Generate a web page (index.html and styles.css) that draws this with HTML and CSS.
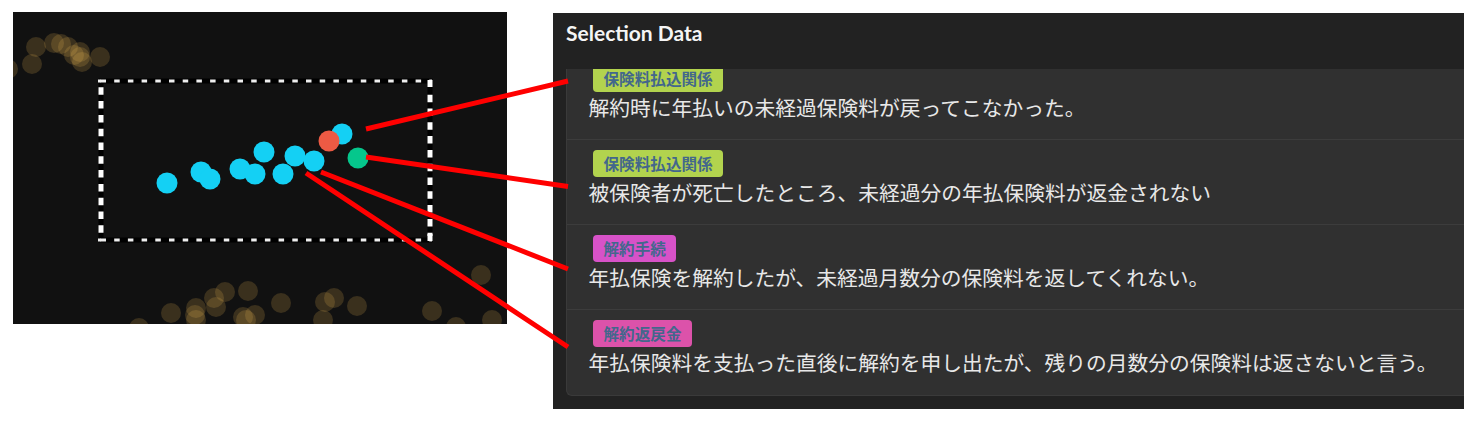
FILE: index.html
```html
<!DOCTYPE html>
<html lang="ja">
<head>
<meta charset="utf-8">
<title>Selection Data</title>
<link rel="stylesheet" href="styles.css">
</head>
<body>
<main class="page">
  <svg class="scatter" width="494" height="312" viewBox="13 12 494 312" aria-hidden="true">
    <rect class="plot-bg" x="13" y="12" width="494" height="312"/>
    <g class="dots">
      <g class="gold">
        <circle cx="36" cy="47" r="10"/><circle cx="54" cy="43" r="10"/><circle cx="61" cy="44" r="10"/><circle cx="68" cy="47" r="10"/>
        <circle cx="80" cy="52" r="10"/><circle cx="80" cy="57" r="10"/><circle cx="82" cy="62" r="10"/><circle cx="74" cy="55" r="10"/>
        <circle cx="100" cy="57" r="10"/><circle cx="32" cy="64" r="10"/><circle cx="8" cy="69" r="10"/>
        <circle cx="481" cy="275" r="10"/><circle cx="225" cy="292" r="10"/><circle cx="248" cy="291" r="10"/><circle cx="214" cy="298" r="10"/>
        <circle cx="216" cy="307" r="10"/><circle cx="196" cy="308" r="10"/><circle cx="171" cy="313" r="10"/><circle cx="195" cy="315" r="10"/>
        <circle cx="196" cy="320" r="10"/><circle cx="139" cy="328" r="10"/><circle cx="255" cy="315" r="10"/><circle cx="243" cy="317" r="10"/>
        <circle cx="246" cy="320" r="10"/><circle cx="281" cy="303" r="10"/><circle cx="334" cy="298" r="10"/><circle cx="325" cy="302" r="10"/>
        <circle cx="357" cy="306" r="10"/><circle cx="323" cy="320" r="10"/><circle cx="432" cy="311" r="10"/><circle cx="456" cy="327" r="10"/>
        <circle cx="492" cy="320" r="10"/>
      </g>
      <g class="blue">
        <circle cx="167" cy="183" r="10.5"/><circle cx="201" cy="172" r="10.5"/><circle cx="210" cy="179" r="10.5"/><circle cx="240" cy="169" r="10.5"/>
        <circle cx="255" cy="174" r="10.5"/><circle cx="264" cy="152" r="10.5"/><circle cx="283" cy="174" r="10.5"/><circle cx="295" cy="156" r="10.5"/>
        <circle cx="314" cy="161" r="10.5"/><circle cx="342" cy="134" r="10.5"/>
      </g>
      <circle class="red" cx="329" cy="141" r="10.5"/>
      <circle class="green" cx="358" cy="158" r="10.5"/>
    </g>
    <g class="selection">
      <path class="sel-back" d="M101 81H430V240H101Z"/>
      <path class="sel-h" d="M100.500 81H432M100.500 240H432"/>
      <path class="sel-corner" d="M98 81H101M98 240H101"/>
      <path class="sel-v" d="M101 87.300V236M430 94.700V236"/>
      <path class="sel-corner-v" d="M430 80V87M430 234V241"/>
    </g>
  </svg>

  <section class="panel">
    <h2 class="panel-title">Selection Data</h2>
    <div class="list-clip">
      <ul class="list">
        <li class="row"><span class="tag tag-green">保険料払込関係</span><p class="row-text">解約時に年払いの未経過保険料が戻ってこなかった。</p></li>
        <li class="row"><span class="tag tag-green">保険料払込関係</span><p class="row-text">被保険者が死亡したところ、未経過分の年払保険料が返金されない</p></li>
        <li class="row"><span class="tag tag-purple">解約手続</span><p class="row-text">年払保険を解約したが、未経過月数分の保険料を返してくれない。</p></li>
        <li class="row"><span class="tag tag-pink">解約返戻金</span><p class="row-text">年払保険料を支払った直後に解約を申し出たが、残りの月数分の保険料は返さないと言う。</p></li>
      </ul>
    </div>
  </section>

  <svg class="connectors" width="1477" height="427" viewBox="0 0 1477 427" aria-hidden="true">
    <path d="M366 129L568 81M366 157L568 186.500M321 172L568 269M306 173L568 347"/>
  </svg>
</main>
</body>
</html>
```
FILE: styles.css
```css
html, body {
  margin: 0;
  padding: 0;
  background: #fff;
}

.page {
  position: relative;
  display: flex;
  align-items: flex-start;
  gap: 46px;
  width: 1477px;
  height: 427px;
  padding: 12px 0 0 13px;
  box-sizing: border-box;
  overflow: hidden;
}

.scatter {
  display: block;
  flex: none;
}

.plot-bg { fill: #111; }
.dots { filter: blur(0.7px); }
.gold circle { fill: #e0b050; fill-opacity: 0.2; }
.blue circle { fill: #14d0f4; }
.red { fill: #ec5a44; }
.green { fill: #05c78c; }

.selection { filter: blur(0.4px); }
.sel-back { fill: none; stroke: #000; stroke-width: 5; }
.sel-h { fill: none; stroke: #eee; stroke-width: 3; stroke-dasharray: 5.500 8.200; }
.sel-corner { fill: none; stroke: #eee; stroke-width: 3; }
.sel-v { fill: none; stroke: #fff; stroke-width: 5; stroke-dasharray: 7.500 6.300; }
.sel-corner-v { fill: none; stroke: #fff; stroke-width: 5; }

.panel {
  flex: none;
  width: 911px;
  height: 396px;
  margin-top: 1px;
  background: #222;
  display: flex;
  flex-direction: column;
  padding-left: 13px;
  box-sizing: border-box;
  overflow: hidden;
}

.panel-title {
  flex: none;
  height: 56px;
  margin: 0;
  font: 700 21px/40px Lato, "Liberation Sans", sans-serif;
  color: #f5f5f5;
}

.list-clip {
  flex: none;
  height: 327px;
  overflow: hidden;
}

.list {
  list-style: none;
  margin: -15px 0 0;
  padding: 0;
  height: 342px;
  box-sizing: border-box;
  background: #303030;
  border: 1px solid #3a3a3a;
  border-right: 0;
  border-radius: 0 0 0 6px;
}

.row {
  height: 85px;
  box-sizing: border-box;
  padding-top: 10px;
  border-bottom: 1px solid #3c3c3c;
}

.row:last-child { border-bottom: 0; }

.tag {
  display: block;
  width: max-content;
  height: 27px;
  margin-left: 26px;
  padding: 0 10.500px;
  box-sizing: border-box;
  border-radius: 4px;
  font: 700 15.600px/26px "Noto Sans CJK JP", sans-serif;
  color: #43678c;
}

.tag-green { background: #b2d34e; }
.tag-purple { background: #d752c8; }
.tag-pink { background: #dc52aa; }

.row-text {
  margin: 0 0 0 21.500px;
  font: 400 20.750px/30px "Noto Sans CJK JP", sans-serif;
  color: #e8e8e8;
  white-space: nowrap;
}

.connectors {
  position: absolute;
  left: 0;
  top: 0;
  pointer-events: none;
}

.connectors path {
  fill: none;
  stroke: #f00;
  stroke-width: 5;
}
```
